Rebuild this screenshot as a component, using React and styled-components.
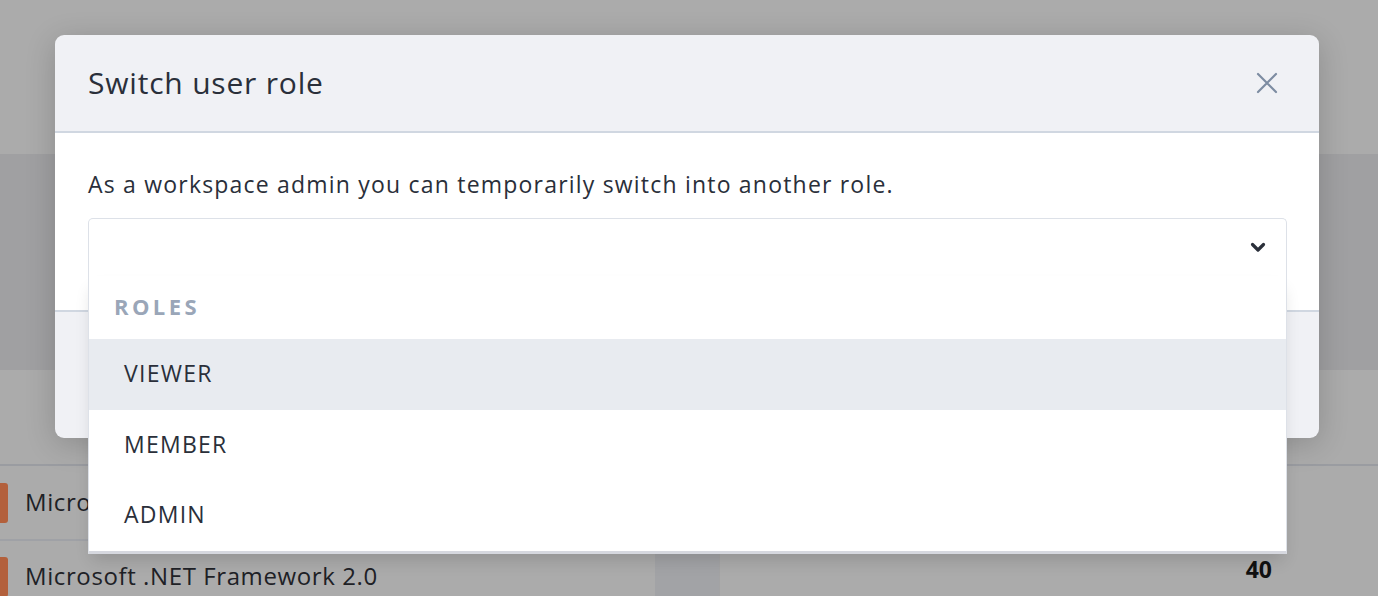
import React from "react";
import styled, { createGlobalStyle } from "styled-components";

const GlobalStyle = createGlobalStyle`
  html, body { margin: 0; padding: 0; }
  body { font-family: "Open Sans", "Noto Sans", sans-serif; }
  * { box-sizing: border-box; }
`;

const Page = styled.div`
  position: relative;
  width: 1378px;
  height: 596px;
  overflow: hidden;
  background: #ababab;
  display: flex;
  flex-direction: column;
`;

const Band = styled.div`
  height: ${(p) => p.$h}px;
  background: ${(p) => p.$bg};
  flex: none;
`;

const Table = styled.div`
  flex: 1;
  border-top: 2px solid #9a9ca1;
  display: grid;
  grid-template-columns: 655px 64px 1fr;
`;

const NameCol = styled.div`
  display: flex;
  flex-direction: column;
`;

const NameRow = styled.div`
  height: ${(p) => p.$h}px;
  flex: none;
  display: flex;
  align-items: center;
  gap: 17px;
  border-bottom: ${(p) => (p.$last ? "none" : "2px solid #9fa1a6")};
  font-size: 24px;
  letter-spacing: 0.6px;
  color: #1e2126;
  white-space: nowrap;
`;

const RowText = styled.span`
  margin-top: -3px;
`;

const Marker = styled.span`
  width: 8px;
  height: 40px;
  background: #b3603c;
  border-radius: 0 3px 3px 0;
  flex: none;
`;

const MidCol = styled.div`
  background: #a2a3a6;
`;

const ValueCol = styled.div`
  border-left: 1px solid #a3a3a4;
  display: flex;
  flex-direction: column;
  align-items: flex-end;
  padding: 89px 106px 0 0;
  font-size: 23px;
  font-weight: 700;
  line-height: 28px;
  color: #111;
`;

const Modal = styled.div`
  position: absolute;
  left: 55px;
  top: 35px;
  width: 1264px;
  height: 403px;
  border-radius: 9px;
  background: #f0f1f5;
  box-shadow: 0 6px 30px rgba(0, 0, 0, 0.18);
  display: flex;
  flex-direction: column;
`;

const Header = styled.div`
  height: 98px;
  flex: none;
  border-bottom: 2px solid #d0d7e1;
  border-radius: 9px 9px 0 0;
  display: flex;
  align-items: center;
  justify-content: space-between;
  padding: 0 40px 0 33px;
`;

const Title = styled.h2`
  margin: 0;
  font-size: 30px;
  font-weight: 500;
  color: #2a2f3a;
  letter-spacing: 0.8px;
  line-height: 40px;
`;

const CloseButton = styled.button`
  border: none;
  background: none;
  padding: 0;
  width: 24px;
  height: 24px;
  display: flex;
  align-items: center;
  justify-content: center;
  color: #7d8ca2;
  cursor: pointer;
`;

const Body = styled.div`
  background: #fff;
  height: 179px;
  flex: none;
  border-bottom: 2px solid #d0d7e1;
  padding: 37px 32px 0 33px;
`;

const Lead = styled.p`
  margin: 0 0 20px;
  font-size: 23px;
  line-height: 28px;
  letter-spacing: 1.2px;
  color: #2a2f3a;
  white-space: nowrap;
`;

const SelectWrap = styled.div`
  position: relative;
  z-index: 2;
`;

const Control = styled.div`
  height: 58px;
  background: #fff;
  border: 1px solid #dde1e8;
  border-bottom: none;
  border-radius: 5px 5px 0 0;
  display: flex;
  align-items: center;
  justify-content: flex-end;
  padding-right: 20px;
  color: #2a2f3a;
`;

const Menu = styled.div`
  position: absolute;
  left: 0;
  right: 0;
  top: 58px;
  background: #fff;
  border: 1px solid #dde1e8;
  border-top: none;
  border-bottom: 3px solid #d6d8df;
  box-shadow: 0 10px 16px -4px rgba(0, 0, 0, 0.14);
`;

const GroupHeading = styled.div`
  height: 63px;
  display: flex;
  align-items: center;
  padding: 0 0 4px 25px;
  font-size: 22px;
  font-weight: 700;
  letter-spacing: 3.4px;
  color: #9aa6b8;
`;

const Option = styled.div`
  height: 70.5px;
  display: flex;
  align-items: center;
  padding: 0 0 2px 35px;
  font-size: 23px;
  letter-spacing: 1.25px;
  color: #2a2f3a;
  background: ${(p) => (p.$active ? "#e8ebf0" : "#fff")};
`;

const FooterArea = styled.div`
  flex: 1;
  border-radius: 0 0 9px 9px;
`;

const roles = ["VIEWER", "MEMBER", "ADMIN"];

export default function App() {
  return (
    <>
      <GlobalStyle />
      <Page>
        <Band $h={154} $bg="#ababab" />
        <Band $h={216} $bg="#a0a0a2" />
        <Band $h={94} $bg="#ababab" />
        <Table>
          <NameCol>
            <NameRow $h={75}>
              <Marker />
              <RowText>Microsoft Visual C++ 2008</RowText>
            </NameRow>
            <NameRow $h={72} $last>
              <Marker />
              <RowText>Microsoft .NET Framework 2.0</RowText>
            </NameRow>
          </NameCol>
          <MidCol />
          <ValueCol>40</ValueCol>
        </Table>

        <Modal role="dialog" aria-label="Switch user role">
          <Header>
            <Title>Switch user role</Title>
            <CloseButton aria-label="Close">
              <svg width="22" height="22" viewBox="0 0 22 22" fill="none" stroke="currentColor" strokeWidth="2.2" strokeLinecap="round">
                <path d="M2 2L20 20M20 2L2 20" />
              </svg>
            </CloseButton>
          </Header>
          <Body>
            <Lead>As a workspace admin you can temporarily switch into another role.</Lead>
            <SelectWrap>
              <Control>
                <svg width="16" height="11" viewBox="0 0 16 11" fill="none" stroke="currentColor" strokeWidth="3.2" strokeLinecap="round" strokeLinejoin="round">
                  <path d="M2.5 2.5L8 8L13.5 2.5" />
                </svg>
              </Control>
              <Menu>
                <GroupHeading>ROLES</GroupHeading>
                {roles.map((r, i) => (
                  <Option key={r} $active={i === 0}>{r}</Option>
                ))}
              </Menu>
            </SelectWrap>
          </Body>
          <FooterArea />
        </Modal>
      </Page>
    </>
  );
}
